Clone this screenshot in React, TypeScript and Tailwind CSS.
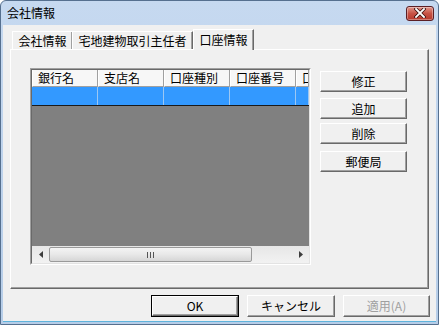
import React from 'react';

const font = { fontFamily: '"Noto Sans CJK JP", "Liberation Sans", sans-serif' };

function Btn({
  label,
  def,
  disabled,
  className = '',
}: {
  label: string;
  def?: boolean;
  disabled?: boolean;
  className?: string;
}) {
  return (
    <div
      className={`box-border flex items-center justify-center bg-[#f0f0f0] text-[12px] leading-none ${
        def ? 'border border-black' : ''
      } ${className}`}
    >
      <div
        className={`flex size-full items-center justify-center border border-t-white border-l-white border-r-[#696969] border-b-[#696969] shadow-[inset_-1px_-1px_0_#a0a0a0] ${
          disabled ? 'text-[#a0a0a0]' : 'text-black'
        }`}
      >
        {label}
      </div>
    </div>
  );
}

const columns = [
  { label: '銀行名', w: 'w-[66px]' },
  { label: '支店名', w: 'w-[66px]' },
  { label: '口座種別', w: 'w-[66px]' },
  { label: '口座番号', w: 'w-[66px]' },
  { label: '口', w: 'flex-1' },
];

export default function App() {
  return (
    <div
      style={font}
      className="relative flex h-[325px] w-[439px] flex-col overflow-hidden rounded-t-[6px] border border-[#56708f] bg-gradient-to-b from-[#c6d9f0] to-[#b6cde8]"
    >
      {/* title bar */}
      <div className="flex h-[24px] shrink-0 items-center justify-between pl-[6px] pr-[4px]">
        <span className="text-[12px] leading-none text-black">会社情報</span>
        <div className="flex h-[15px] w-[28px] items-center justify-center rounded-[3px] border border-[#5b1f25] bg-gradient-to-b from-[#e0958a] via-[#c75245] to-[#b6382c] shadow-[inset_0_0_0_1px_rgba(255,255,255,0.35)]">
          <svg width="12" height="10" viewBox="0 0 12 10">
            <path d="M2 1 L10 9 M10 1 L2 9" stroke="#3a1010" strokeWidth="3.4" strokeLinecap="square" />
            <path d="M2 1 L10 9 M10 1 L2 9" stroke="#ffffff" strokeWidth="1.8" strokeLinecap="square" />
          </svg>
        </div>
      </div>

      {/* client */}
      <div className="mx-[2px] mb-[2px] flex flex-1 flex-col border-b border-[#5fb4dc] bg-[#f0f0f0]">
        <div className="mx-[7px] mt-[4px] flex flex-col">
          {/* tabs */}
          <div className="relative z-10 flex h-[20px] items-end pl-[2px] text-[12px] leading-none text-black">
            <div className="flex h-[18px] w-[60px] items-center justify-center border border-r-0 border-b-0 border-t-white border-l-white shadow-[inset_-1px_0_0_#a0a0a0] pt-[1px]">
              会社情報
            </div>
            <div className="flex h-[18px] w-[121px] items-center justify-center border border-b-0 border-t-white border-l-white border-r-[#696969] shadow-[inset_-1px_0_0_#a0a0a0] pt-[1px]">
              宅地建物取引主任者
            </div>
            <div className="-mb-[1px] flex h-[21px] w-[61px] items-start justify-center border border-b-0 border-t-white border-l-white border-r-[#696969] bg-[#f0f0f0] pt-[4px] shadow-[inset_-1px_0_0_#a0a0a0]">
              口座情報
            </div>
          </div>

          {/* tab panel */}
          <div className="flex h-[240px] border border-t-white border-l-white border-r-[#696969] border-b-[#696969] shadow-[inset_-1px_-1px_0_#a0a0a0]">
            {/* list view */}
            <div className="ml-[19px] mt-[18px] flex h-[197px] w-[281px] flex-col border border-t-[#a0a0a0] border-l-[#a0a0a0] border-r-white border-b-white">
              <div className="flex flex-1 flex-col border border-t-[#696969] border-l-[#696969] border-r-[#e3e3e3] border-b-[#e3e3e3]">
                <div className="flex h-[17px] shrink-0 text-[12px] leading-none text-black">
                  {columns.map((c) => (
                    <div
                      key={c.label}
                      className={`${c.w} flex items-center overflow-hidden whitespace-nowrap border-r border-b border-l border-l-white border-r-[#a0a0a0] border-b-[#a0a0a0] bg-[#f7f7f7] pl-[5px]`}
                    >
                      {c.label}
                    </div>
                  ))}
                </div>
                <div className="flex h-[19px] shrink-0 border-b border-[#1a1a1a] bg-[#3399ff]">
                  {columns.map((c) => (
                    <div key={c.label} className={`${c.w} border-r border-[#9cc7f3]`} />
                  ))}
                </div>
                <div className="flex-1 bg-[#808080]" />
                {/* horizontal scrollbar */}
                <div className="flex h-[17px] shrink-0 items-center bg-gradient-to-b from-[#e6e6e6] to-[#f2f2f2]">
                  <div className="flex w-[17px] items-center justify-center">
                    <svg width="4" height="7" viewBox="0 0 4 7">
                      <path d="M4 0 L0 3.5 L4 7 Z" fill="#3c3c3c" />
                    </svg>
                  </div>
                  <div className="flex h-[15px] w-[203px] items-center justify-center rounded-[2px] border border-[#9a9a9a] bg-gradient-to-b from-[#f4f4f4] via-[#e8e8e8] to-[#d6d6d6]">
                    <div className="flex gap-[1px]">
                      <div className="h-[6px] w-[1px] bg-[#555]" />
                      <div className="ml-[1px] h-[6px] w-[1px] bg-[#555]" />
                      <div className="ml-[1px] h-[6px] w-[1px] bg-[#555]" />
                    </div>
                  </div>
                  <div className="flex-1" />
                  <div className="flex w-[17px] items-center justify-center">
                    <svg width="4" height="7" viewBox="0 0 4 7">
                      <path d="M0 0 L4 3.5 L0 7 Z" fill="#3c3c3c" />
                    </svg>
                  </div>
                </div>
              </div>
            </div>

            {/* right buttons */}
            <div className="ml-[9px] mt-[21px] flex flex-col">
              <Btn label="修正" className="h-[21px] w-[87px]" />
              <Btn label="追加" className="mt-[6px] h-[21px] w-[87px]" />
              <Btn label="削除" className="mt-[4px] h-[21px] w-[87px]" />
              <Btn label="郵便局" className="mt-[7px] h-[21px] w-[87px]" />
            </div>
          </div>
        </div>

        {/* bottom buttons */}
        <div className="mt-[6px] flex justify-end gap-[8px] pr-[6px]">
          <Btn label="OK" def className="h-[22px] w-[88px]" />
          <Btn label="キャンセル" className="h-[22px] w-[88px]" />
          <Btn label="適用(A)" disabled className="h-[22px] w-[87px]" />
        </div>
      </div>
    </div>
  );
}
